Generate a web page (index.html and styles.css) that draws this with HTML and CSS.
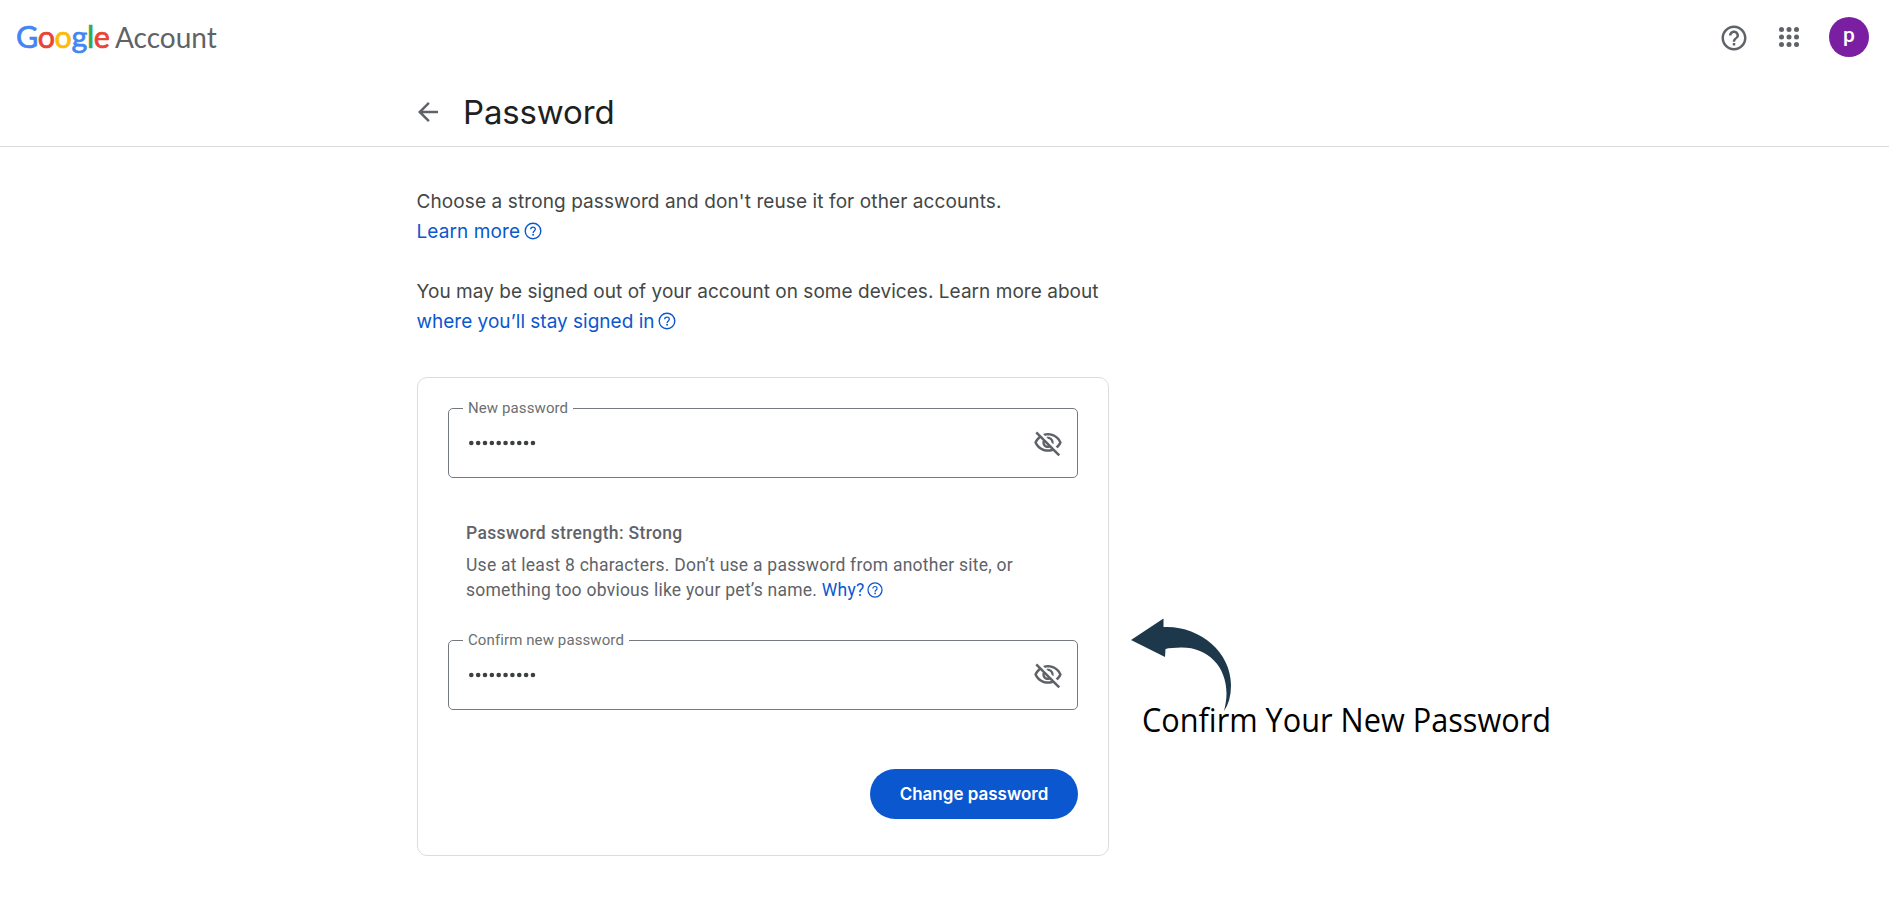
FILE: index.html
```html
<!DOCTYPE html>
<html lang="en">
<head>
<meta charset="utf-8">
<title>Password</title>
<link rel="stylesheet" href="styles.css">
</head>
<body>
<svg class="defs" width="0" height="0" aria-hidden="true">
  <symbol id="help" viewBox="0 0 24 24"><path d="M11 18h2v-2h-2v2zm1-16C6.480 2 2 6.480 2 12s4.480 10 10 10 10-4.480 10-10S17.520 2 12 2zm0 18c-4.410 0-8-3.590-8-8s3.590-8 8-8 8 3.590 8 8-3.590 8-8 8zm0-14c-2.210 0-4 1.790-4 4h2c0-1.100.9-2 2-2s2 .9 2 2c0 2-3 1.750-3 5h2c0-2.250 3-2.500 3-5 0-2.210-1.790-4-4-4z"/></symbol>
  <symbol id="help-thin" viewBox="0 0 20 20"><circle cx="10" cy="10" r="7.8" fill="none" stroke="currentColor" stroke-width="1.4"/><path d="M7.7 8.3c0-1.3 1-2.2 2.3-2.2s2.3.9 2.3 2.1c0 1.7-2.2 1.8-2.2 3.7" fill="none" stroke="currentColor" stroke-width="1.3"/><circle cx="10.1" cy="13.8" r=".95"/></symbol>
  <symbol id="eye-off" viewBox="0 0 24 24"><path d="M10.58 7.25l1.56 1.56c1.38.07 2.47 1.17 2.54 2.54l1.56 1.56c.16-.44.26-.91.26-1.41C16.5 9.02 14.48 7 12 7c-.5 0-.97.1-1.42.25z"/><path d="M12 6c3.79 0 7.17 2.13 8.82 5.5-.64 1.32-1.56 2.44-2.66 3.33l1.42 1.42c1.51-1.26 2.7-2.89 3.43-4.74C21.27 7.11 17 4 12 4c-1.4 0-2.73.25-3.98.7L9.63 6.3C10.4 6.12 11.19 6 12 6z"/><path d="M16.43 15.93l-1.25-1.25-1.27-1.27-3.82-3.82-1.27-1.27-1.25-1.25-1.48-1.48-2.78-2.78-1.42 1.41 2.53 2.53C2.92 8.02 1.73 9.64 1 11.5 2.73 15.89 7 19 12 19c1.4 0 2.73-.25 3.98-.7l4.3 4.3 1.41-1.41-3.78-3.78-1.48-1.48zm-4.57-1.74c-1.38-.07-2.47-1.17-2.54-2.54l2.54 2.54zM12 17c-3.79 0-7.17-2.13-8.82-5.5.64-1.32 1.56-2.44 2.66-3.33l1.91 1.91c-.15.45-.25.92-.25 1.42 0 2.48 2.02 4.5 4.5 4.5.5 0 .97-.1 1.42-.25l.95.95c-.77.18-1.56.3-2.37.3z"/></symbol>
  <symbol id="dots" viewBox="0 0 68 6"><path d="M2.3 3h.01M9.15 3h.01M16 3h.01M22.85 3h.01M29.7 3h.01M36.55 3h.01M43.4 3h.01M50.25 3h.01M57.1 3h.01M63.95 3h.01" fill="none" stroke="currentColor" stroke-width="4.6" stroke-linecap="round"/></symbol>
</svg>
<header class="header">
  <div class="topbar">
    <div class="logo"><span class="google"><span class="b">G</span><span class="r">o</span><span class="y">o</span><span class="b">g</span><span class="g">l</span><span class="r">e</span></span><span class="account">Account</span></div>
    <div class="actions">
      <svg class="icon help-main"><use href="#help"/></svg>
      <svg class="icon apps" viewBox="0 0 24 24"><circle cx="6" cy="6" r="2"/><circle cx="12" cy="6" r="2"/><circle cx="18" cy="6" r="2"/><circle cx="6" cy="12" r="2"/><circle cx="12" cy="12" r="2"/><circle cx="18" cy="12" r="2"/><circle cx="6" cy="18" r="2"/><circle cx="12" cy="18" r="2"/><circle cx="18" cy="18" r="2"/></svg>
      <div class="avatar">p</div>
    </div>
  </div>
  <div class="titlebar">
    <svg class="icon" viewBox="0 0 24 24"><path d="M20 11H7.83l5.59-5.59L12 4l-8 8 8 8 1.41-1.41L7.83 13H20v-2z"/></svg>
    <h1 class="title">Password</h1>
  </div>
</header>
<main class="main">
  <section class="content">
    <div class="intro">
      <p><span class="wide">Choose a strong password and don't reuse it for other accounts.</span><br><a class="link wide">Learn more</a><svg class="help"><use href="#help-thin"/></svg></p>
      <p><span class="snug">You may be signed out of your account on some devices. Learn more about</span><br><a class="link">where you’ll stay signed in</a><svg class="help"><use href="#help-thin"/></svg></p>
    </div>
    <form class="card">
      <fieldset class="field">
        <legend class="label">New password</legend>
        <div class="row"><svg class="dots"><use href="#dots"/></svg><svg class="icon"><use href="#eye-off"/></svg></div>
      </fieldset>
      <div class="hint">
        <p class="strength">Password strength: Strong</p>
        <p>Use at least 8 characters. Don’t use a password from another site, or<br>something too obvious like your pet’s name. <a class="link">Why?</a><svg class="help small"><use href="#help-thin"/></svg></p>
      </div>
      <fieldset class="field">
        <legend class="label">Confirm new password</legend>
        <div class="row"><svg class="dots"><use href="#dots"/></svg><svg class="icon"><use href="#eye-off"/></svg></div>
      </fieldset>
      <button class="submit" type="button"><span>Change password</span></button>
    </form>
  </section>
  <aside class="note">
    <svg class="arrow" viewBox="0 0 102 96"><path d="M1 22L33.500 0.500V9C68 7 101 33 101 67Q101 83 94 93C104 57 83 29 51 29.500Q41 29.500 35.500 31L35 39Z"/></svg>
    <div class="caption">Confirm Your New Password</div>
  </aside>
</main>
</body>
</html>
```

FILE: styles.css
```css
* { box-sizing: border-box; }
body { margin: 0; width: 1889px; height: 905px; overflow: hidden; background: #fff; color: #444746; font-family: Inter, sans-serif; }
p, h1 { margin: 0; }
.defs { position: absolute; }
.icon { width: 30px; height: 30px; fill: #5f6368; flex: none; display: block; }
.header { height: 147px; border-bottom: 1px solid #dadce0; }
.topbar { display: flex; justify-content: space-between; height: 76px; padding: 0 20px 0 16px; }
.logo { display: flex; align-items: baseline; padding-top: 16px; font-family: Lato, sans-serif; line-height: 40px; height: 60px; }
.google { width: 99px; font-size: 30.5px; letter-spacing: -.4px; -webkit-text-stroke: .7px currentColor; }
.b { color: #4285f4; }
.r { color: #ea4335; }
.y { color: #fbbc05; }
.g { color: #34a853; }
.account { font-size: 28px; color: #5f6368; }
.actions { display: flex; align-items: center; height: 74px; }
.help-main { margin-top: 2px; }
.apps { margin: 0 25px; }
.avatar { width: 40px; height: 40px; border-radius: 50%; background: #7b1fa2; color: #fff; font: 500 21px/37px Roboto, sans-serif; text-align: center; }
.titlebar { display: flex; align-items: center; gap: 20px; height: 72px; padding-left: 413px; }
.title { font: 400 33px/44px Inter, sans-serif; letter-spacing: -.15px; color: #1f1f1f; }
.main { display: flex; align-items: flex-start; }
.content { width: 692px; margin-left: 417px; padding-top: 40px; }
.intro { display: grid; gap: 30px; margin-left: -.5px; font-size: 19px; line-height: 30px; white-space: nowrap; }
.wide { letter-spacing: .1px; }
.snug { letter-spacing: .04px; }
.link { color: #0b57d0; }
.help { width: 20px; height: 20px; fill: #0b57d0; color: #0b57d0; vertical-align: -3px; margin-left: 3px; }
.help.small { width: 18px; height: 18px; margin-left: 1.5px; vertical-align: -2.5px; }
.card { display: flex; flex-direction: column; width: 692px; height: 479px; margin-top: 40px; padding: 19px 30px 0; border: 1px solid #dadce0; border-radius: 10px; font-family: Roboto, sans-serif; }
.field { width: 630px; height: 81px; margin: 0; padding: 0 14px; border: 1px solid #747a80; border-radius: 5px; min-width: 0; }
.label { padding: 0 5px; font-size: 15px; line-height: 22px; letter-spacing: .1px; color: #6b6f73; }
.row { display: flex; justify-content: space-between; align-items: center; height: 48px; padding-left: 6px; }
.dots { width: 68px; height: 6px; color: #3c4043; }
.hint { height: 151px; padding: 43px 18px 0; font-size: 17.5px; line-height: 25px; letter-spacing: .25px; color: #5f6368; white-space: nowrap; }
.strength { font-weight: 500; letter-spacing: .34px; margin-bottom: 7px; }
.submit { align-self: flex-end; width: 208px; height: 50px; margin-top: 59px; border: 0; border-radius: 25px; background: #0b57d0; color: #fff; font: 600 17px/50px Inter, sans-serif; padding: 0; }
.note { width: 430px; padding-top: 471px; margin-left: 21px; }
.arrow { display: block; width: 102px; height: 96px; fill: #1e384b; }
.caption { margin: -19px 0 0 12px; font: 400 33px/50px "Open Sans", sans-serif; color: #000; white-space: nowrap; transform-origin: 0 50%; transform: scaleX(.93); }
```
